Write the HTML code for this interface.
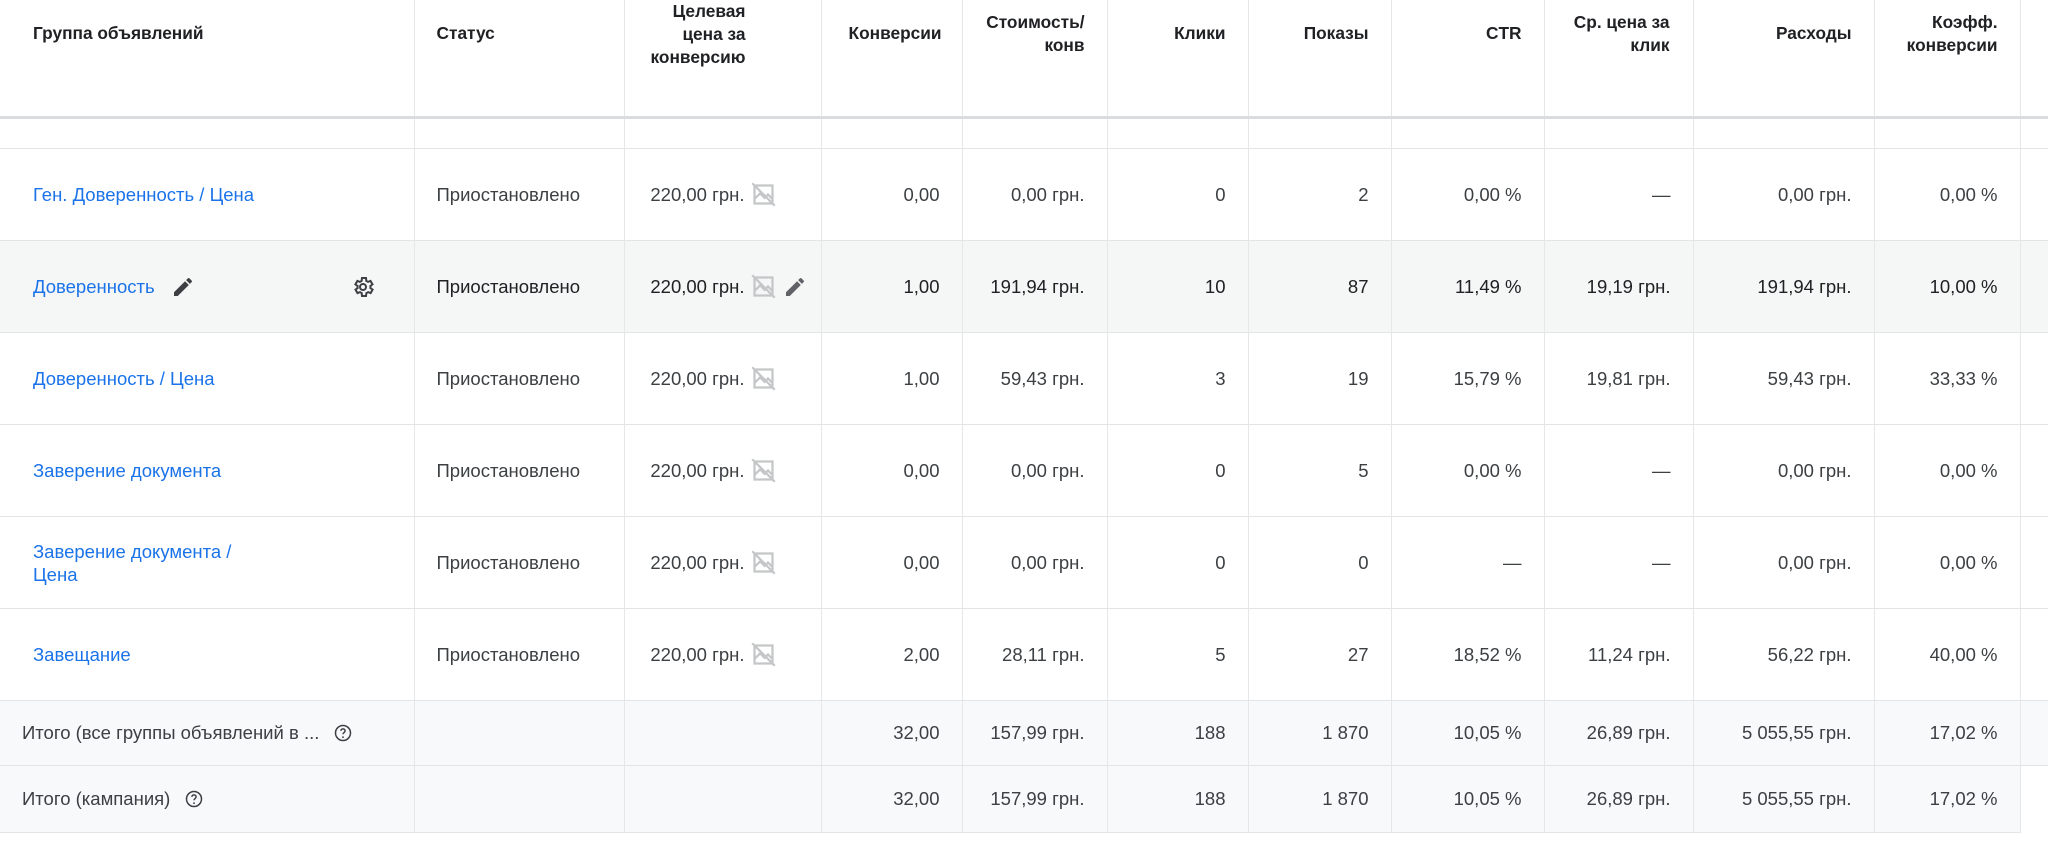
<!DOCTYPE html>
<html><head><meta charset="utf-8"><style>
body{margin:0;width:2048px;height:843px;background:#fff;overflow:hidden;font-family:"Liberation Sans",Arial,sans-serif;color:#3c4043;}
table{position:absolute;left:0;top:0;border-collapse:collapse;table-layout:fixed;width:2048px;}
td,th{border-left:1px solid #e6e7e9;border-bottom:1px solid #e3e4e6;font-size:18.5px;padding:0 22px 0 0;text-align:right;white-space:nowrap;overflow:hidden;}
td:first-child,th:first-child{border-left:none;}
th{font-weight:bold;color:#202124;vertical-align:top;font-size:17.3px;line-height:23px;height:116px;padding:0 !important;border-bottom:3px solid #dadce0;}
th div{height:116px;box-sizing:border-box;padding-right:22px;overflow:hidden;}
th.l div{padding-left:33px;text-align:left}
th.s div{padding-left:22px;text-align:left}
.l{text-align:left;padding-left:33px;}
.s{text-align:left;padding-left:22px;}
a{color:#1a73e8;text-decoration:none;}
tr.sp td{height:29px;}
tr.r td{height:91px;}
tr.h td{background:#f5f6f6;color:#202124;}
tr.t td{background:#f8f9fa;height:64px;}
tr.t2 td{height:66px;}
.f{display:flex;align-items:center;justify-content:flex-end;}
.fl{display:flex;align-items:center;}
.f svg,.fl svg{flex:none;margin-left:5px;}
</style></head><body>
<table>
<colgroup><col style="width:414px"><col style="width:210px"><col style="width:197px"><col style="width:141px"><col style="width:145px"><col style="width:141px"><col style="width:143px"><col style="width:153px"><col style="width:149px"><col style="width:181px"><col style="width:146px"><col style="width:28px"></colgroup>
<tr>
<th class="l"><div style="padding-top:22px">Группа объявлений</div></th>
<th class="s"><div style="padding-top:22px">Статус</div></th>
<th><div style="padding-top:0;padding-right:75px">Целевая<br>цена за<br>конверсию</div></th>
<th><div style="padding-top:22px;padding-right:20px">Конверсии</div></th>
<th><div style="padding-top:11px">Стоимость/<br>конв</div></th>
<th><div style="padding-top:22px">Клики</div></th>
<th><div style="padding-top:22px">Показы</div></th>
<th><div style="padding-top:22px">CTR</div></th>
<th><div style="padding-top:11px;padding-right:23px">Ср. цена за<br>клик</div></th>
<th><div style="padding-top:22px">Расходы</div></th>
<th><div style="padding-top:11px">Коэфф.<br>конверсии</div></th>
<th></th>
</tr>
<tr class="sp"><td></td><td></td><td></td><td></td><td></td><td></td><td></td><td></td><td></td><td></td><td></td><td></td></tr>
<tr class="r"><td class="l"><a>Ген. Доверенность / Цена</a></td><td class="s">Приостановлено</td><td style="padding-right:44px"><div class="f">220,00 грн.<svg width="27" height="27" viewBox="0 0 24 24"><path d="M4 4h16v16H4z M4 16l5-5 4 4 3-3 4 4 M2 2l20 20" fill="none" stroke="#c4c6c8" stroke-width="2"/></svg></div></td><td>0,00</td><td>0,00 грн.</td><td>0</td><td>2</td><td>0,00 %</td><td>—</td><td>0,00 грн.</td><td>0,00 %</td><td></td></tr>
<tr class="r h"><td class="l"><div class="fl"><a>Доверенность</a><svg style="margin-left:16px" width="24" height="24" viewBox="0 0 24 24"><path d="M3 17.25V21h3.75L17.81 9.94l-3.75-3.75L3 17.25zM20.71 7.04a1 1 0 000-1.41l-2.34-2.34a1 1 0 00-1.41 0l-1.83 1.83 3.75 3.75 1.83-1.83z" fill="#3c4043"/></svg><svg style="margin-left:auto;margin-right:17px" width="24" height="24" viewBox="0 0 24 24"><path d="M19.4 13a7.5 7.5 0 000-2l2.1-1.6-2-3.5-2.5 1a7 7 0 00-1.7-1L15 3h-4l-.4 2.9a7 7 0 00-1.7 1l-2.5-1-2 3.5L6.6 11a7.5 7.5 0 000 2l-2.1 1.6 2 3.5 2.5-1a7 7 0 001.7 1L11 21h4l.4-2.9a7 7 0 001.7-1l2.5 1 2-3.5z" fill="none" stroke="#3c4043" stroke-width="2"/><circle cx="12" cy="12" r="3" fill="none" stroke="#3c4043" stroke-width="2"/></svg></div></td><td class="s">Приостановлено</td><td style="padding-right:14px"><div class="f">220,00 грн.<svg width="27" height="27" viewBox="0 0 24 24"><path d="M4 4h16v16H4z M4 16l5-5 4 4 3-3 4 4 M2 2l20 20" fill="none" stroke="#c4c6c8" stroke-width="2"/></svg><svg style="margin-left:6px" width="24" height="24" viewBox="0 0 24 24"><path d="M3 17.25V21h3.75L17.81 9.94l-3.75-3.75L3 17.25zM20.71 7.04a1 1 0 000-1.41l-2.34-2.34a1 1 0 00-1.41 0l-1.83 1.83 3.75 3.75 1.83-1.83z" fill="#5f6368"/></svg></div></td><td>1,00</td><td>191,94 грн.</td><td>10</td><td>87</td><td>11,49 %</td><td>19,19 грн.</td><td>191,94 грн.</td><td>10,00 %</td><td></td></tr>
<tr class="r"><td class="l"><a>Доверенность / Цена</a></td><td class="s">Приостановлено</td><td style="padding-right:44px"><div class="f">220,00 грн.<svg width="27" height="27" viewBox="0 0 24 24"><path d="M4 4h16v16H4z M4 16l5-5 4 4 3-3 4 4 M2 2l20 20" fill="none" stroke="#c4c6c8" stroke-width="2"/></svg></div></td><td>1,00</td><td>59,43 грн.</td><td>3</td><td>19</td><td>15,79 %</td><td>19,81 грн.</td><td>59,43 грн.</td><td>33,33 %</td><td></td></tr>
<tr class="r"><td class="l"><a>Заверение документа</a></td><td class="s">Приостановлено</td><td style="padding-right:44px"><div class="f">220,00 грн.<svg width="27" height="27" viewBox="0 0 24 24"><path d="M4 4h16v16H4z M4 16l5-5 4 4 3-3 4 4 M2 2l20 20" fill="none" stroke="#c4c6c8" stroke-width="2"/></svg></div></td><td>0,00</td><td>0,00 грн.</td><td>0</td><td>5</td><td>0,00 %</td><td>—</td><td>0,00 грн.</td><td>0,00 %</td><td></td></tr>
<tr class="r"><td class="l" style="line-height:23px"><a>Заверение документа /<br>Цена</a></td><td class="s">Приостановлено</td><td style="padding-right:44px"><div class="f">220,00 грн.<svg width="27" height="27" viewBox="0 0 24 24"><path d="M4 4h16v16H4z M4 16l5-5 4 4 3-3 4 4 M2 2l20 20" fill="none" stroke="#c4c6c8" stroke-width="2"/></svg></div></td><td>0,00</td><td>0,00 грн.</td><td>0</td><td>0</td><td>—</td><td>—</td><td>0,00 грн.</td><td>0,00 %</td><td></td></tr>
<tr class="r"><td class="l"><a>Завещание</a></td><td class="s">Приостановлено</td><td style="padding-right:44px"><div class="f">220,00 грн.<svg width="27" height="27" viewBox="0 0 24 24"><path d="M4 4h16v16H4z M4 16l5-5 4 4 3-3 4 4 M2 2l20 20" fill="none" stroke="#c4c6c8" stroke-width="2"/></svg></div></td><td>2,00</td><td>28,11 грн.</td><td>5</td><td>27</td><td>18,52 %</td><td>11,24 грн.</td><td>56,22 грн.</td><td>40,00 %</td><td></td></tr>
<tr class="t"><td class="s"><div class="fl">Итого (все группы объявлений в ...<svg style="margin-left:14px" width="20" height="20" viewBox="0 0 24 24"><circle cx="12" cy="12" r="9" fill="none" stroke="#3c4043" stroke-width="1.8"/><path d="M9.5 9.5a2.5 2.5 0 115 0c0 2-2.5 2-2.5 4" fill="none" stroke="#3c4043" stroke-width="1.8"/><circle cx="12" cy="17" r="1.1" fill="#3c4043"/></svg></div></td><td></td><td></td><td>32,00</td><td>157,99 грн.</td><td>188</td><td>1 870</td><td>10,05 %</td><td>26,89 грн.</td><td>5 055,55 грн.</td><td>17,02 %</td><td></td></tr>
<tr class="t t2"><td class="s"><div class="fl">Итого (кампания)<svg style="margin-left:14px" width="20" height="20" viewBox="0 0 24 24"><circle cx="12" cy="12" r="9" fill="none" stroke="#3c4043" stroke-width="1.8"/><path d="M9.5 9.5a2.5 2.5 0 115 0c0 2-2.5 2-2.5 4" fill="none" stroke="#3c4043" stroke-width="1.8"/><circle cx="12" cy="17" r="1.1" fill="#3c4043"/></svg></div></td><td></td><td></td><td>32,00</td><td>157,99 грн.</td><td>188</td><td>1 870</td><td>10,05 %</td><td>26,89 грн.</td><td>5 055,55 грн.</td><td>17,02 %</td><td style="background:#fff;border-bottom:none"></td></tr>
</table>
</body></html>
